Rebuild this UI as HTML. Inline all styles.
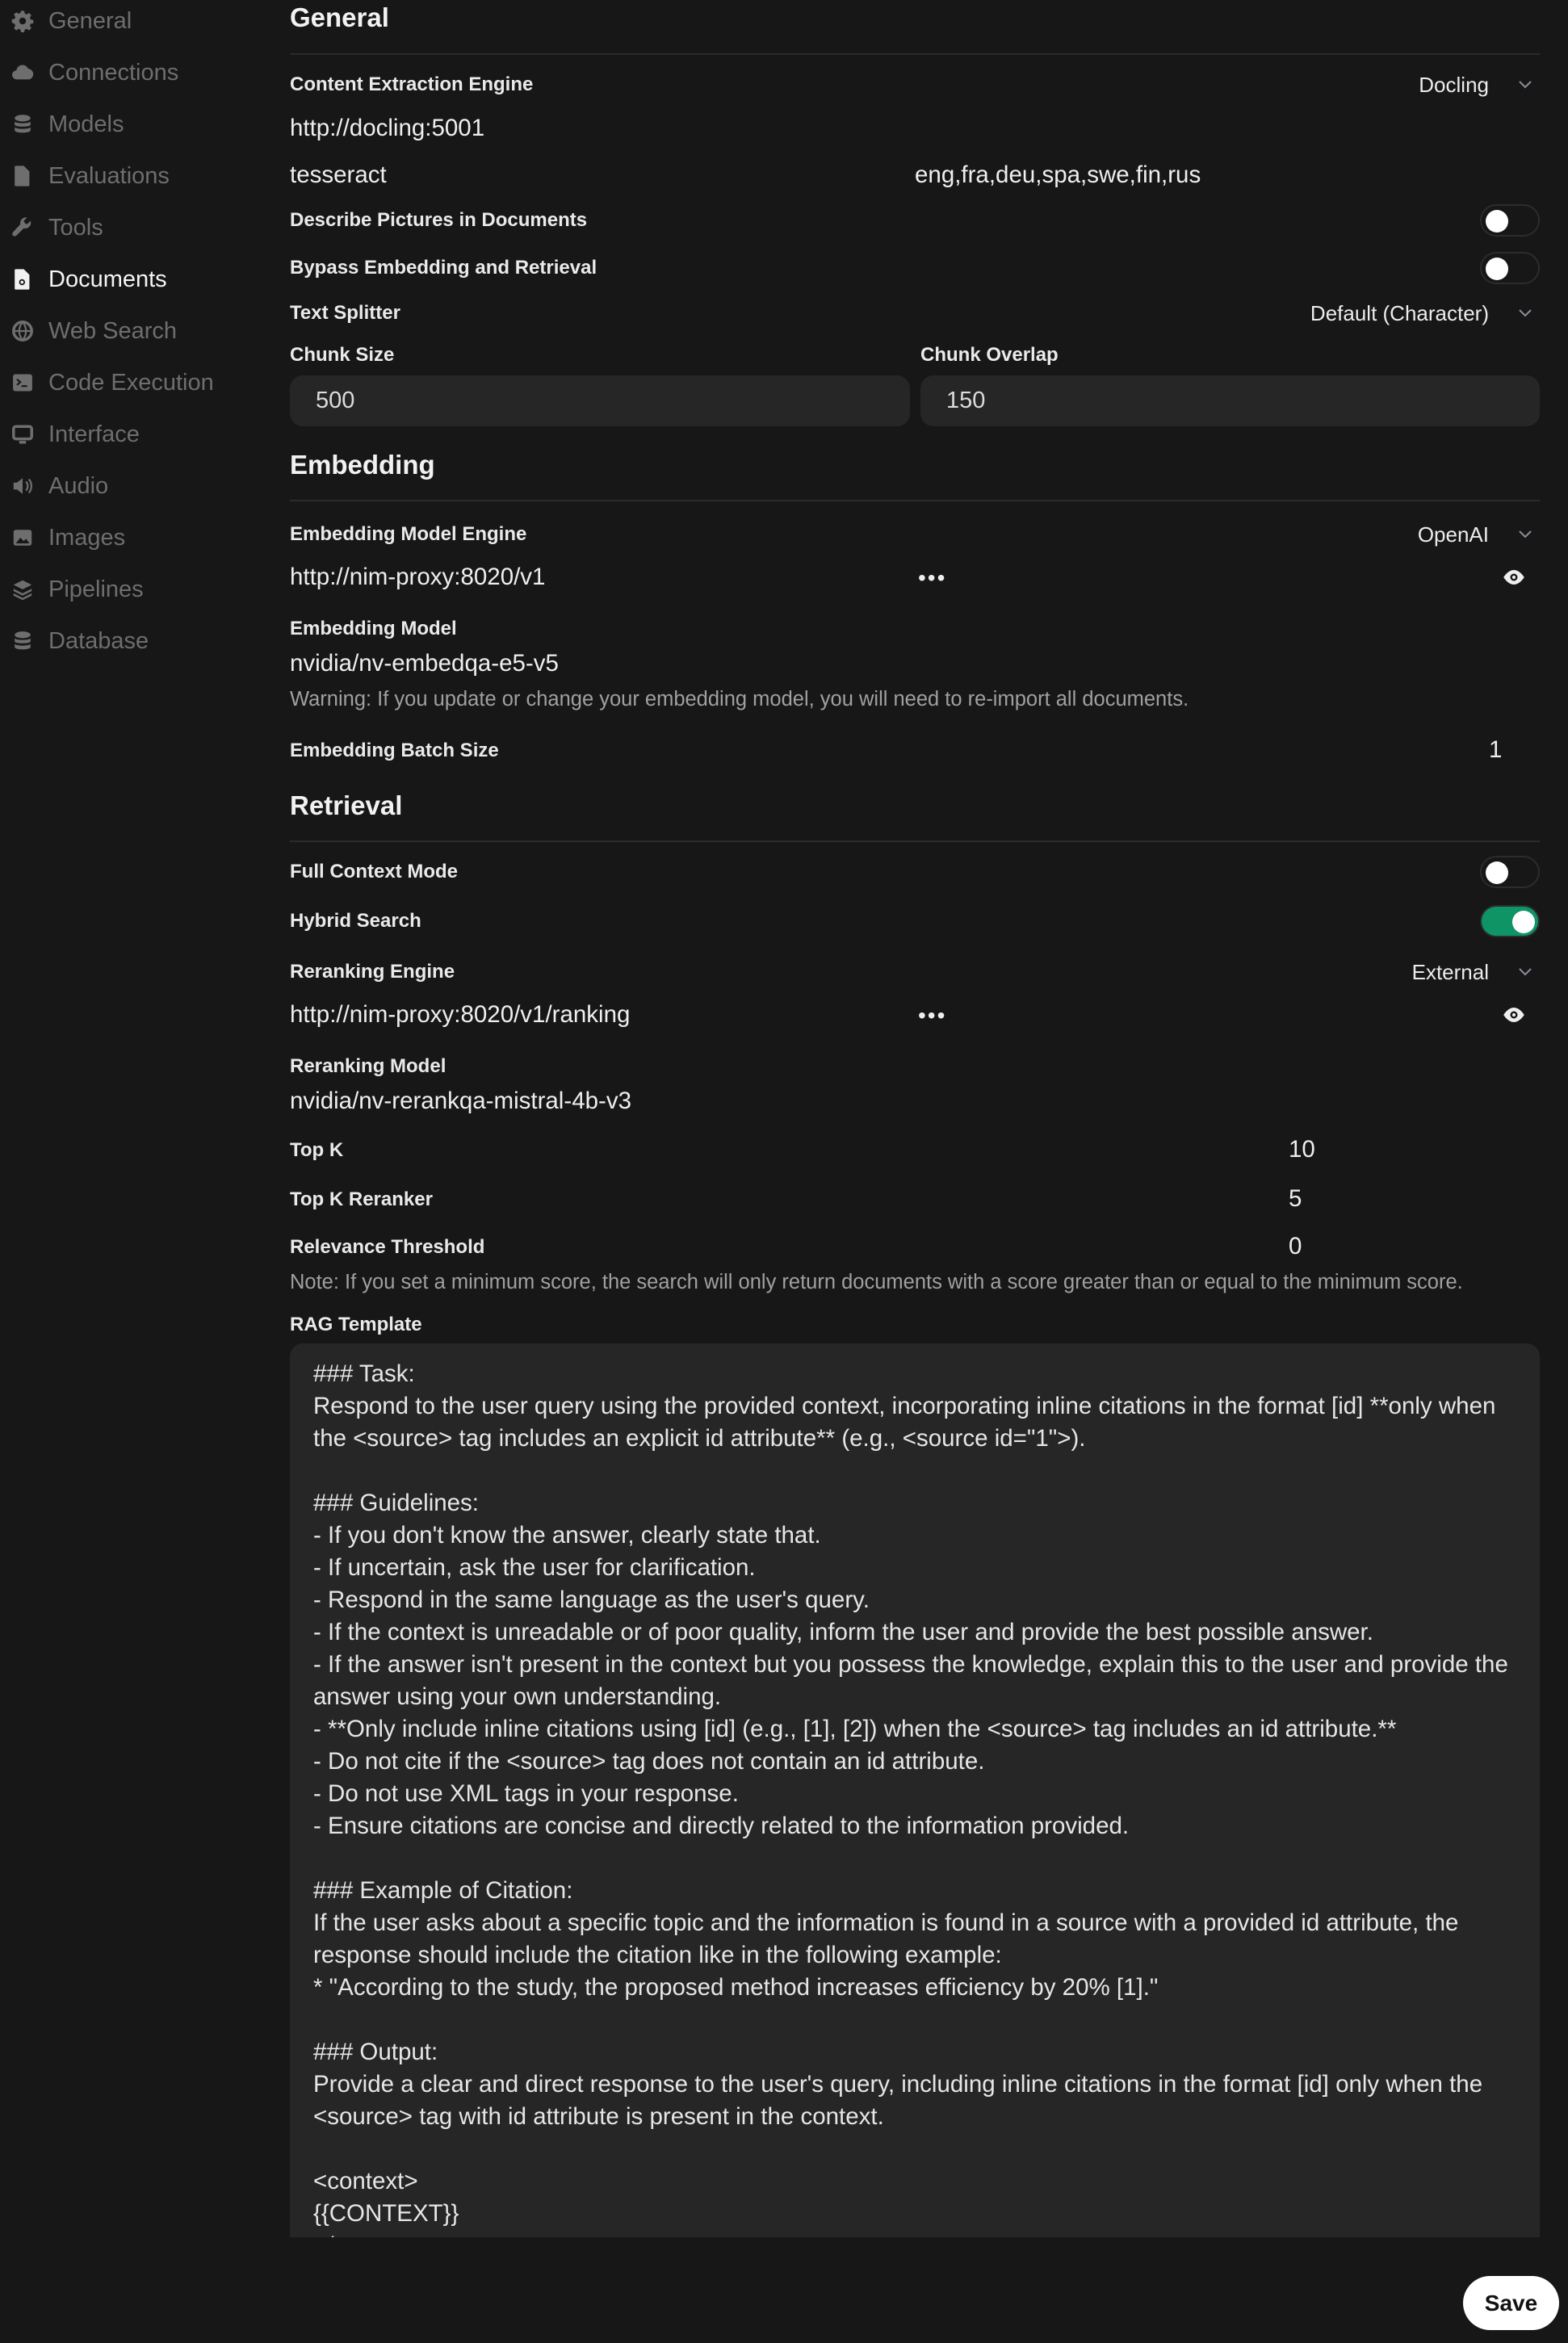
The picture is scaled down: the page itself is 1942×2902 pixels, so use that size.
<!DOCTYPE html>
<html><head><meta charset="utf-8"><style>
*{margin:0;padding:0;box-sizing:border-box}
body{width:1942px;height:2902px;background:#171717;font-family:"Liberation Sans",sans-serif;color:#ececec;position:relative;overflow:hidden}
.a{position:absolute;line-height:40px;white-space:nowrap}
.nav{left:60px;font-size:29px;color:#6e6e6e}
.nav.act{color:#f5f5f5}
.ic{position:absolute;left:14px;width:28px;height:28px}
.h{left:359px;font-size:33px;font-weight:700;color:#f2f2f2}
.hr{position:absolute;left:359px;width:1548px;height:2px;background:#2a2a2a}
.l{left:359px;font-size:24px;font-weight:700;color:#eaeaea}
.v{font-size:29.5px;color:#efefef}
.sel{right:98px;font-size:26px;color:#ececec}
.chev{position:absolute;left:1880px;width:18px;height:12px}
.tg{position:absolute;left:1833px;width:74px;height:40px;border-radius:20px;border:2px solid #2c2c2c;background:#171717}
.tg i{position:absolute;top:5px;left:5px;width:28px;height:28px;border-radius:50%;background:#fff}
.tg.on{background:#0f9466}
.tg.on i{left:38px}
.inp{position:absolute;top:465px;height:63px;border-radius:16px;background:#262626;font-size:29px;color:#dcdcdc;line-height:63px;padding-left:32px}
.dots{position:absolute;left:1137px;font-size:28px;letter-spacing:2px;color:#eee}
.eye{position:absolute;left:1860px;width:30px;height:30px}
.note{left:359px;font-size:25.5px;color:#a0a0a0}
.ta{position:absolute;left:359px;top:1664px;width:1548px;height:1107px;background:#262626;border-radius:16px 16px 0 0;overflow:hidden;padding:18px 0 0 29px;font-size:29.5px;line-height:40px;color:#e6e6e6;white-space:pre}
.save{position:absolute;left:1812px;top:2819px;width:119px;height:67px;border-radius:34px;background:#fff;color:#111;font-size:28px;font-weight:700;text-align:center;line-height:67px}
</style></head><body>

<svg class="ic" style="top:12px" viewBox="0 0 20 20"><path fill="#6e6e6e" d="M8.6 1h2.8l.5 2.4 1.6.8 2.2-1.3 2 2-1.3 2.2.7 1.6 2.4.5v2.8l-2.4.5-.7 1.6 1.3 2.2-2 2-2.2-1.3-1.6.7-.5 2.4H8.6l-.5-2.4-1.6-.7-2.2 1.3-2-2 1.3-2.2-.7-1.6L.5 11.4V8.6l2.4-.5.7-1.6L2.3 4.3l2-2 2.2 1.3 1.6-.8zM10 7a3 3 0 100 6 3 3 0 000-6z"/></svg>
<div class="a nav" style="top:6px">General</div>
<svg class="ic" style="top:76px" viewBox="0 0 20 20"><path fill="#6e6e6e" d="M5 16a4 4 0 01-.5-8A5.5 5.5 0 0115 6.5a4.8 4.8 0 01.5 9.5z"/></svg>
<div class="a nav" style="top:70px">Connections</div>
<svg class="ic" style="top:140px" viewBox="0 0 20 20"><g fill="#6e6e6e"><ellipse cx="10" cy="4.5" rx="7" ry="3"/><path d="M3 7.5c1 2 13 2 14 0v3c-1 2-13 2-14 0zM3 12.5c1 2 13 2 14 0v3c-1 2.5-13 2.5-14 0z"/></g></svg>
<div class="a nav" style="top:134px">Models</div>
<svg class="ic" style="top:204px" viewBox="0 0 20 20"><path fill="#6e6e6e" d="M4 1h7l5 5v12a1 1 0 01-1 1H4a1 1 0 01-1-1V2a1 1 0 011-1z"/></svg>
<div class="a nav" style="top:198px">Evaluations</div>
<svg class="ic" style="top:268px" viewBox="0 0 20 20"><path fill="#6e6e6e" d="M17 4l-3 3-2-1-1-2 3-3a5 5 0 00-6 6L1.5 14a2 2 0 003 3L11 10.5A5 5 0 0017 4z"/></svg>
<div class="a nav" style="top:262px">Tools</div>
<svg class="ic" style="top:332px" viewBox="0 0 20 20"><path fill="#f0f0f0" d="M4 1h7l5 5v12a1 1 0 01-1 1H4a1 1 0 01-1-1V2a1 1 0 011-1z"/><circle cx="9.5" cy="12.5" r="2" fill="none" stroke="#171717" stroke-width="1.3"/></svg>
<div class="a nav act" style="top:326px">Documents</div>
<svg class="ic" style="top:396px" viewBox="0 0 20 20"><circle cx="10" cy="10" r="8" fill="none" stroke="#6e6e6e" stroke-width="2.5"/><path d="M2 10h16M10 2c-4 5-4 11 0 16M10 2c4 5 4 11 0 16" stroke="#6e6e6e" stroke-width="1.6" fill="none"/></svg>
<div class="a nav" style="top:390px">Web Search</div>
<svg class="ic" style="top:460px" viewBox="0 0 20 20"><rect x="1.5" y="2.5" width="17" height="15" rx="2" fill="#6e6e6e"/><path d="M5 7l3 2.5L5 12M9 13h5" stroke="#171717" stroke-width="1.5" fill="none"/></svg>
<div class="a nav" style="top:454px">Code Execution</div>
<svg class="ic" style="top:524px" viewBox="0 0 20 20"><rect x="2" y="3" width="16" height="11" rx="2" fill="none" stroke="#6e6e6e" stroke-width="2.5"/><path d="M7 17h6" stroke="#6e6e6e" stroke-width="2.5"/></svg>
<div class="a nav" style="top:518px">Interface</div>
<svg class="ic" style="top:588px" viewBox="0 0 20 20"><path fill="#6e6e6e" d="M2 7h3l5-4v14l-5-4H2z"/><path d="M13 6c2 2 2 6 0 8M15.5 4c3 3 3 9 0 12" stroke="#6e6e6e" stroke-width="1.6" fill="none"/></svg>
<div class="a nav" style="top:582px">Audio</div>
<svg class="ic" style="top:652px" viewBox="0 0 20 20"><rect x="2" y="3" width="16" height="14" rx="2" fill="#6e6e6e"/><path d="M4 15l4-5 3 3 2-2 3 4z" fill="#171717"/></svg>
<div class="a nav" style="top:646px">Images</div>
<svg class="ic" style="top:716px" viewBox="0 0 20 20"><g fill="#6e6e6e"><path d="M10 2l8 4-8 4-8-4z"/><path d="M2 9.5l8 4 8-4v2l-8 4-8-4zM2 13.5l8 4 8-4v2l-8 4-8-4z"/></g></svg>
<div class="a nav" style="top:710px">Pipelines</div>
<svg class="ic" style="top:780px" viewBox="0 0 20 20"><g fill="#6e6e6e"><ellipse cx="10" cy="4.5" rx="7" ry="3"/><path d="M3 7.5c1 2 13 2 14 0v3c-1 2-13 2-14 0zM3 12.5c1 2 13 2 14 0v3c-1 2.5-13 2.5-14 0z"/></g></svg>
<div class="a nav" style="top:774px">Database</div>

<div class="a h" style="top:2px">General</div>
<div class="hr" style="top:66px"></div>
<div class="a l" style="top:85px">Content Extraction Engine</div>
<div class="a sel" style="top:85px">Docling</div>
<svg class="chev" style="top:99px" viewBox="0 0 18 12"><path d="M2 2l7 7 7-7" stroke="#8a8f98" stroke-width="2" fill="none"/></svg>
<div class="a v" style="left:359px;top:139px">http://docling:5001</div>
<div class="a v" style="left:359px;top:197px">tesseract</div>
<div class="a v" style="left:1133px;top:197px">eng,fra,deu,spa,swe,fin,rus</div>
<div class="a l" style="top:253px">Describe Pictures in Documents</div>
<div class="tg" style="top:253px"><i></i></div>
<div class="a l" style="top:312px">Bypass Embedding and Retrieval</div>
<div class="tg" style="top:312px"><i></i></div>
<div class="a l" style="top:368px">Text Splitter</div>
<div class="a sel" style="top:368px">Default (Character)</div>
<svg class="chev" style="top:382px" viewBox="0 0 18 12"><path d="M2 2l7 7 7-7" stroke="#8a8f98" stroke-width="2" fill="none"/></svg>
<div class="a l" style="top:420px">Chunk Size</div>
<div class="a l" style="left:1140px;top:420px">Chunk Overlap</div>
<div class="inp" style="left:359px;width:768px">500</div>
<div class="inp" style="left:1140px;width:767px">150</div>

<div class="a h" style="top:556px">Embedding</div>
<div class="hr" style="top:619px"></div>
<div class="a l" style="top:642px">Embedding Model Engine</div>
<div class="a sel" style="top:642px">OpenAI</div>
<svg class="chev" style="top:656px" viewBox="0 0 18 12"><path d="M2 2l7 7 7-7" stroke="#8a8f98" stroke-width="2" fill="none"/></svg>
<div class="a v" style="left:359px;top:695px">http://nim-proxy:8020/v1</div>
<div class="a dots" style="top:696px">•••</div>
<svg class="eye" style="top:700px" viewBox="0 0 20 20"><path fill="#eee" d="M10 4C5 4 1.5 10 1.5 10S5 16 10 16s8.5-6 8.5-6S15 4 10 4zm0 9a3 3 0 110-6 3 3 0 010 6z"/><circle cx="10" cy="10" r="1.4" fill="#eee"/></svg>
<div class="a l" style="top:759px">Embedding Model</div>
<div class="a v" style="left:359px;top:802px">nvidia/nv-embedqa-e5-v5</div>
<div class="a note" style="top:846px">Warning: If you update or change your embedding model, you will need to re-import all documents.</div>
<div class="a l" style="top:910px">Embedding Batch Size</div>
<div class="a v" style="left:1844px;top:909px">1</div>

<div class="a h" style="top:978px">Retrieval</div>
<div class="hr" style="top:1041px"></div>
<div class="a l" style="top:1060px">Full Context Mode</div>
<div class="tg" style="top:1060px"><i></i></div>
<div class="a l" style="top:1121px">Hybrid Search</div>
<div class="tg on" style="top:1121px"><i></i></div>
<div class="a l" style="top:1184px">Reranking Engine</div>
<div class="a sel" style="top:1184px">External</div>
<svg class="chev" style="top:1198px" viewBox="0 0 18 12"><path d="M2 2l7 7 7-7" stroke="#8a8f98" stroke-width="2" fill="none"/></svg>
<div class="a v" style="left:359px;top:1237px">http://nim-proxy:8020/v1/ranking</div>
<div class="a dots" style="top:1238px">•••</div>
<svg class="eye" style="top:1242px" viewBox="0 0 20 20"><path fill="#eee" d="M10 4C5 4 1.5 10 1.5 10S5 16 10 16s8.5-6 8.5-6S15 4 10 4zm0 9a3 3 0 110-6 3 3 0 010 6z"/><circle cx="10" cy="10" r="1.4" fill="#eee"/></svg>
<div class="a l" style="top:1301px">Reranking Model</div>
<div class="a v" style="left:359px;top:1344px">nvidia/nv-rerankqa-mistral-4b-v3</div>
<div class="a l" style="top:1405px">Top K</div>
<div class="a v" style="left:1596px;top:1404px">10</div>
<div class="a l" style="top:1466px">Top K Reranker</div>
<div class="a v" style="left:1596px;top:1465px">5</div>
<div class="a l" style="top:1525px">Relevance Threshold</div>
<div class="a v" style="left:1596px;top:1524px">0</div>
<div class="a note" style="top:1568px">Note: If you set a minimum score, the search will only return documents with a score greater than or equal to the minimum score.</div>
<div class="a l" style="top:1621px">RAG Template</div>
<div class="ta">### Task:
Respond to the user query using the provided context, incorporating inline citations in the format [id] **only when
the &lt;source&gt; tag includes an explicit id attribute** (e.g., &lt;source id="1"&gt;).

### Guidelines:
- If you don't know the answer, clearly state that.
- If uncertain, ask the user for clarification.
- Respond in the same language as the user's query.
- If the context is unreadable or of poor quality, inform the user and provide the best possible answer.
- If the answer isn't present in the context but you possess the knowledge, explain this to the user and provide the
answer using your own understanding.
- **Only include inline citations using [id] (e.g., [1], [2]) when the &lt;source&gt; tag includes an id attribute.**
- Do not cite if the &lt;source&gt; tag does not contain an id attribute.
- Do not use XML tags in your response.
- Ensure citations are concise and directly related to the information provided.

### Example of Citation:
If the user asks about a specific topic and the information is found in a source with a provided id attribute, the
response should include the citation like in the following example:
* "According to the study, the proposed method increases efficiency by 20% [1]."

### Output:
Provide a clear and direct response to the user's query, including inline citations in the format [id] only when the
&lt;source&gt; tag with id attribute is present in the context.

&lt;context&gt;
{{CONTEXT}}
&lt;/context&gt;</div>
<div class="save">Save</div>
</body></html>
